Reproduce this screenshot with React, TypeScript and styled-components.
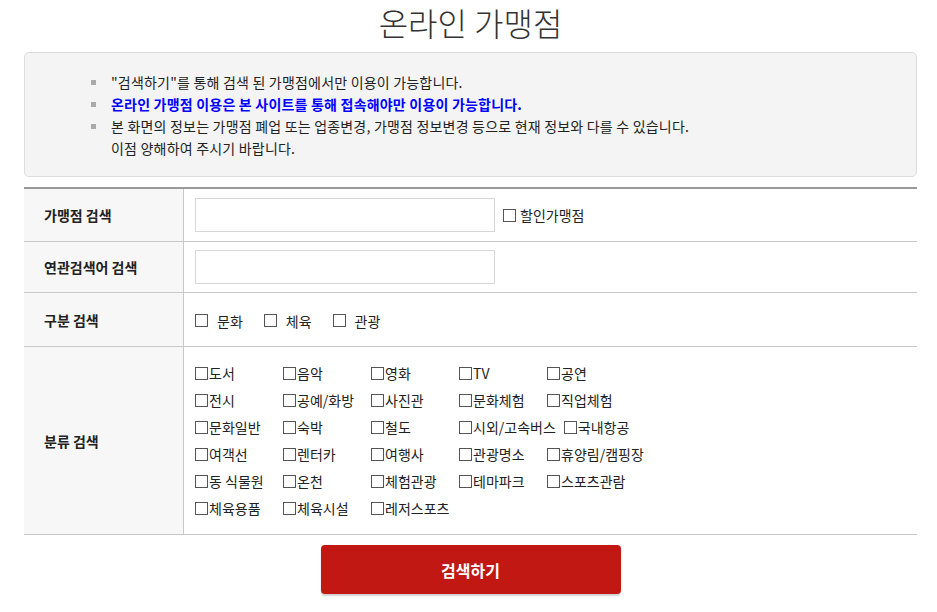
import styled, { createGlobalStyle } from "styled-components";

const GlobalStyle = createGlobalStyle`
  body {
    margin: 0;
    background: #fff;
    font-family: "Noto Sans CJK KR", "Noto Sans", sans-serif;
    color: #333;
  }
`;

const Page = styled.div`
  width: 893px;
  margin: 0 24px;
  padding-bottom: 20px;
`;

const Title = styled.h1`
  margin: 0;
  height: 52px;
  line-height: 44px;
  text-align: center;
  font-size: 32px;
  font-weight: 300;
  color: #333;
`;

const Notice = styled.div`
  background: #f4f4f4;
  border: 1px solid #dcdcdc;
  border-radius: 5px;
  padding: 18px 0 17px 66px;
`;

const NoticeList = styled.ul`
  margin: 0;
  padding: 0;
  list-style: none;
`;

const NoticeItem = styled.li<{ $strong?: boolean }>`
  position: relative;
  padding-left: 20px;
  font-size: 14px;
  letter-spacing: 0.2px;
  line-height: 22px;
  color: ${(p) => (p.$strong ? "#0000ff" : "#222")};
  font-weight: ${(p) => (p.$strong ? 700 : 400)};
  &::before {
    content: "";
    position: absolute;
    left: 0;
    top: 9px;
    width: 5px;
    height: 5px;
    background: #aaa;
  }
`;

const Table = styled.div`
  margin-top: 10px;
  border-top: 2px solid #999;
  border-bottom: 1px solid #c8c8c8;
`;

const Row = styled.div<{ $h: number }>`
  display: flex;
  min-height: ${(p) => p.$h}px;
  & + & {
    border-top: 1px solid #c8c8c8;
  }
`;

const Head = styled.div`
  width: 160px;
  flex: none;
  box-sizing: border-box;
  padding-left: 20px;
  display: flex;
  align-items: center;
  background: #f7f7f7;
  border-right: 1px solid #c8c8c8;
  font-size: 14px;
  font-weight: 700;
  color: #222;
`;

const Cell = styled.div`
  flex: 1;
  display: flex;
  align-items: center;
  padding-left: 11px;
  gap: 8px;
`;

const TextInput = styled.input`
  width: 300px;
  height: 34px;
  box-sizing: border-box;
  border: 1px solid #d8d8d8;
  outline: none;
`;

const Box = styled.span`
  display: inline-block;
  width: 13px;
  height: 13px;
  box-sizing: border-box;
  border: 1px solid #555;
  background: #fff;
  flex: none;
`;

const Check = styled.label<{ $gap?: number }>`
  display: inline-flex;
  align-items: center;
  gap: ${(p) => p.$gap ?? 1}px;
  font-size: 14px;
  color: #222;
  white-space: nowrap;
`;

const Kinds = styled.div`
  display: flex;
  gap: 21px;
  padding-top: 2px;
`;

const Grid = styled.div`
  padding: 17px 0 13px 11px;
  display: flex;
  flex-direction: column;
  gap: 9px;
`;

const GridRow = styled.div`
  display: flex;
  height: 18px;
`;

const GridItem = styled(Check)`
  min-width: 80px;
  margin-right: 8px;
`;

const Actions = styled.div`
  display: flex;
  justify-content: center;
  padding-top: 10px;
`;

const SearchButton = styled.button`
  width: 300px;
  height: 49px;
  border: none;
  border-radius: 4px;
  background: #c21813;
  box-shadow: 0 2px 2px #d0d0d0;
  color: #fff;
  font-family: inherit;
  font-size: 16px;
  font-weight: 700;
`;

const categories = [
  ["도서", "음악", "영화", "TV", "공연"],
  ["전시", "공예/화방", "사진관", "문화체험", "직업체험"],
  ["문화일반", "숙박", "철도", "시외/고속버스", "국내항공"],
  ["여객선", "렌터카", "여행사", "관광명소", "휴양림/캠핑장"],
  ["동 식물원", "온천", "체험관광", "테마파크", "스포츠관람"],
  ["체육용품", "체육시설", "레저스포츠"],
];

export default function App() {
  return (
    <>
      <GlobalStyle />
      <Page>
        <Title>온라인 가맹점</Title>
        <Notice>
          <NoticeList>
            <NoticeItem>"검색하기"를 통해 검색 된 가맹점에서만 이용이 가능합니다.</NoticeItem>
            <NoticeItem $strong>온라인 가맹점 이용은 본 사이트를 통해 접속해야만 이용이 가능합니다.</NoticeItem>
            <NoticeItem>
              본 화면의 정보는 가맹점 폐업 또는 업종변경, 가맹점 정보변경 등으로 현재 정보와 다를 수 있습니다.
              <br />
              이점 양해하여 주시기 바랍니다.
            </NoticeItem>
          </NoticeList>
        </Notice>

        <Table>
          <Row $h={52}>
            <Head>가맹점 검색</Head>
            <Cell>
              <TextInput />
              <Check $gap={4}>
                <Box />
                할인가맹점
              </Check>
            </Cell>
          </Row>
          <Row $h={50}>
            <Head>연관검색어 검색</Head>
            <Cell>
              <TextInput />
            </Cell>
          </Row>
          <Row $h={53}>
            <Head>구분 검색</Head>
            <Cell>
              <Kinds>
                {["문화", "체육", "관광"].map((k) => (
                  <Check key={k} $gap={9}>
                    <Box />
                    {k}
                  </Check>
                ))}
              </Kinds>
            </Cell>
          </Row>
          <Row $h={187}>
            <Head>분류 검색</Head>
            <Grid>
              {categories.map((row, i) => (
                <GridRow key={i}>
                  {row.map((c) => (
                    <GridItem key={c}>
                      <Box />
                      {c}
                    </GridItem>
                  ))}
                </GridRow>
              ))}
            </Grid>
          </Row>
        </Table>

        <Actions>
          <SearchButton>검색하기</SearchButton>
        </Actions>
      </Page>
    </>
  );
}
